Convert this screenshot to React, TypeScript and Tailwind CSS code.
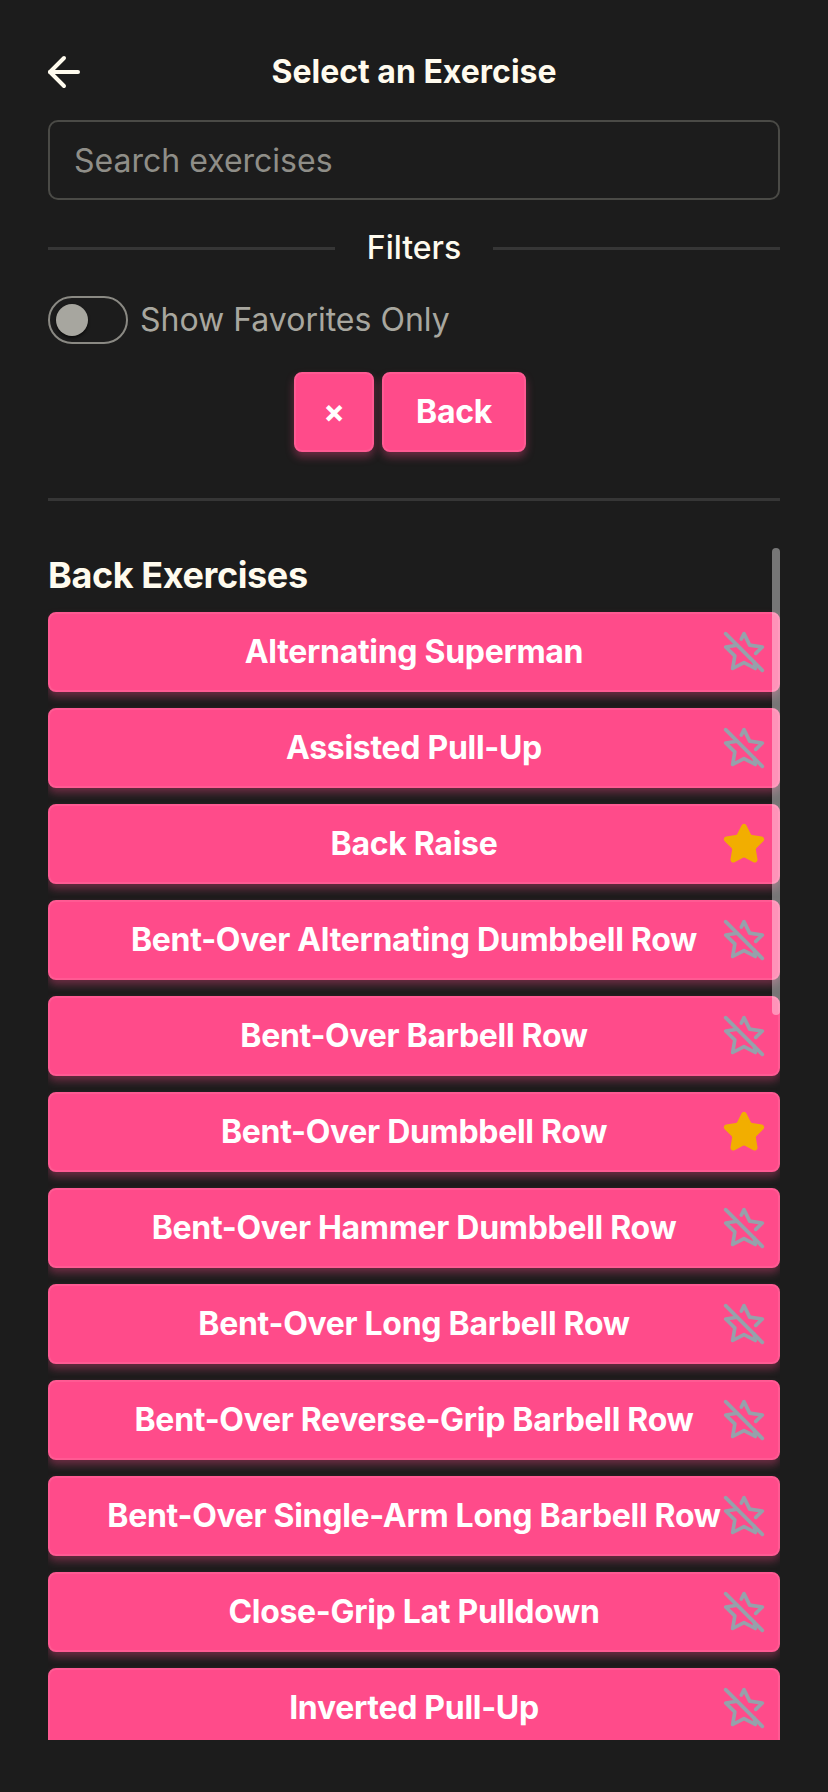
import { ArrowLeft, Star, StarOff } from "lucide-react";

const exercises = [
    { name: "Alternating Superman", fav: false },
    { name: "Assisted Pull-Up", fav: false },
    { name: "Back Raise", fav: true },
    { name: "Bent-Over Alternating Dumbbell Row", fav: false },
    { name: "Bent-Over Barbell Row", fav: false },
    { name: "Bent-Over Dumbbell Row", fav: true },
    { name: "Bent-Over Hammer Dumbbell Row", fav: false },
    { name: "Bent-Over Long Barbell Row", fav: false },
    { name: "Bent-Over Reverse-Grip Barbell Row", fav: false },
    { name: "Bent-Over Single-Arm Long Barbell Row", fav: false },
    { name: "Close-Grip Lat Pulldown", fav: false },
    { name: "Inverted Pull-Up", fav: false },
];

function ExerciseCard({ name, fav }: { name: string; fav: boolean }) {
    return (
        <div className="relative flex h-20 shrink-0 items-center justify-center rounded-lg border-2 border-[#ff5a93] bg-[#ff4b8a] shadow-[0_5px_8px_rgba(255,75,138,0.35)]">
            <span className="text-[32px] font-bold leading-10 tracking-[-0.3px] text-white">{name}</span>
            <span className="absolute right-3 top-1/2 -translate-y-1/2">
                {fav ? (
                    <Star size={44} strokeWidth={2} className="fill-[#f2ae00] text-[#f2ae00]" />
                ) : (
                    <StarOff size={44} strokeWidth={2} className="text-[#96a1ab]" />
                )}
            </span>
        </div>
    );
}

export default function App() {
    return (
        <div className="flex h-[1792px] flex-col overflow-hidden bg-[#1c1c1c] px-12 pb-[52px] pt-12 font-['Inter',sans-serif]">
            {/* Header */}
            <div className="relative flex h-12 items-center justify-center">
                <button className="absolute -left-2 top-0 text-[#fffbee]">
                    <ArrowLeft size={48} strokeWidth={2} />
                </button>
                <h1 className="text-[32px] font-bold leading-10 text-[#fffbee]">Select an Exercise</h1>
            </div>

            {/* Search */}
            <input
                type="text"
                placeholder="Search exercises"
                className="mt-6 h-20 w-full rounded-[10px] border-2 border-[#4a4a46] bg-transparent px-6 text-[32px] text-[#fffbee] outline-none placeholder:text-[#8f8e88]"
            />

            {/* Filters divider */}
            <div className="mt-7 flex h-10 items-center gap-8">
                <div className="h-[3px] flex-1 bg-[#363636]" />
                <span className="text-[32px] font-medium leading-10 text-[#fffbee]">Filters</span>
                <div className="h-[3px] flex-1 bg-[#363636]" />
            </div>

            {/* Favorites toggle */}
            <div className="mt-7 flex h-12 items-center gap-3">
                <div className="flex h-12 w-20 items-center rounded-full border-2 border-[#8a8983] pl-[6px]">
                    <div className="h-8 w-8 rounded-full bg-[#a7a69f] shadow-[0_2px_3px_rgba(0,0,0,0.6)]" />
                </div>
                <span className="text-[32px] leading-10 text-[#a8a79f]">Show Favorites Only</span>
            </div>

            {/* Muscle filter chips */}
            <div className="mt-7 flex h-20 justify-center gap-2 pr-2">
                <button className="flex h-20 w-[80px] items-center justify-center rounded-lg border-2 border-[#ff5a93] bg-[#ff4b8a] text-[32px] font-bold text-white shadow-[0_5px_8px_rgba(255,75,138,0.35)]">
                    ×
                </button>
                <button className="flex h-20 w-[144px] items-center justify-center rounded-lg border-2 border-[#ff5a93] bg-[#ff4b8a] text-[32px] font-bold tracking-[-0.3px] text-white shadow-[0_5px_8px_rgba(255,75,138,0.35)]">
                    Back
                </button>
            </div>

            <div className="mt-[46px] h-[3px] bg-[#363636]" />

            {/* Exercise list */}
            <div className="relative mt-[47px] flex-1 overflow-hidden">
                <h2 className="mt-[5px] mb-[15px] text-[36px] font-bold leading-[44px] tracking-[-0.4px] text-[#fffbee]">Back Exercises</h2>
                <div className="flex flex-col gap-4">
                    {exercises.map((ex) => (
                        <ExerciseCard key={ex.name} name={ex.name} fav={ex.fav} />
                    ))}
                </div>
                {/* scroll thumb */}
                <div className="absolute right-0 top-0 h-[467px] w-2 rounded-sm bg-white/40" />
            </div>
        </div>
    );
}
